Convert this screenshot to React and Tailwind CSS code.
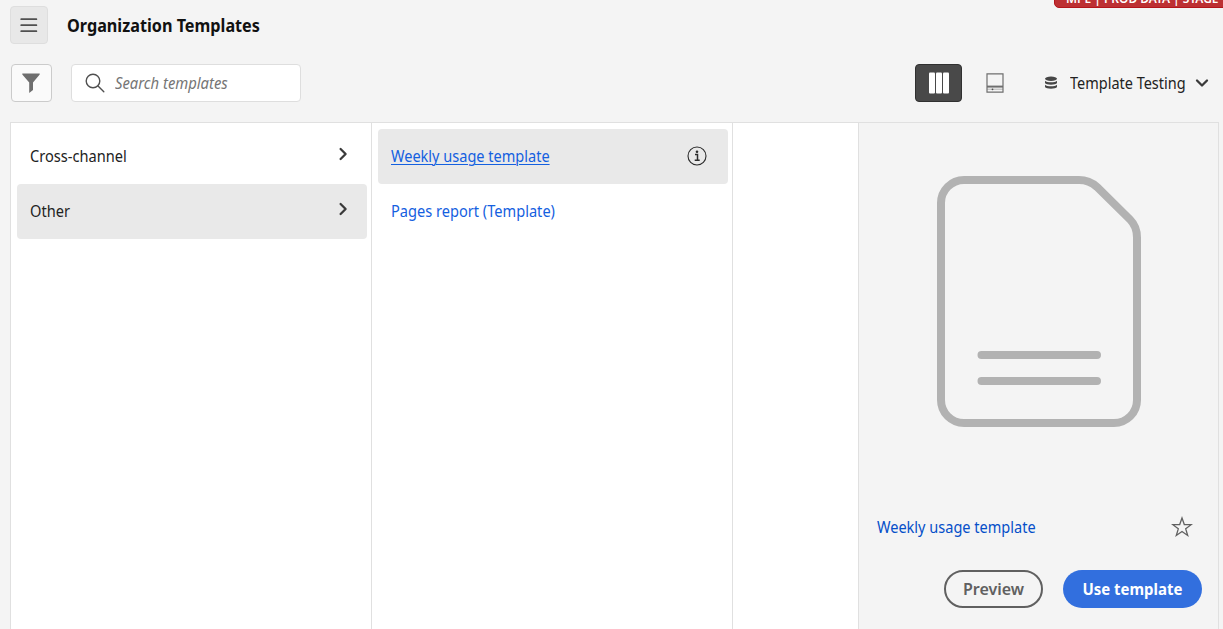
import React from 'react';

function MenuIcon() {
  return (
    <svg width="18" height="16" viewBox="0 0 18 16" stroke="#505050" strokeWidth="1.7" strokeLinecap="round">
      <path d="M1.200 2.200H16.400M1.200 8.200H16.400M1.200 14.200H16.400" />
    </svg>
  );
}

function Chevron({ className, down }) {
  return (
    <svg className={className} width="14" height="14" viewBox="0 0 14 14" fill="none" stroke="#3a3a3a" strokeWidth="2.3" strokeLinecap="round" strokeLinejoin="round">
      <path d={down ? 'M2 4.500L7 9.500L12 4.500' : 'M4.600 2L9.600 7L4.600 12'} />
    </svg>
  );
}

function FolderRow({ label, selected }) {
  return (
    <div className={`flex h-[55px] items-center justify-between rounded pl-[13px] pr-[17px] ${selected ? 'bg-[#e9e9e9]' : ''}`}>
      <span className="origin-left scale-x-[0.912] text-[16px] leading-5 text-[#222222]">{label}</span>
      <Chevron className="-mt-1" />
    </div>
  );
}

function Toolbar() {
  return (
    <div className="mt-5 flex h-[38px] items-center">
      <button className="ml-px flex h-[38px] w-[41px] items-center justify-center rounded border border-[#cbcbcb] bg-[#fafafa]">
        <svg className="-ml-0.5" width="20" height="20" viewBox="0 0 20 20" fill="#6e6e6e">
          <path d="M1.300 0.500H18.700V1.500L12 9.600V17L8.200 20V9.600L1.300 1.500Z" />
        </svg>
      </button>
      <div className="ml-[19px] flex h-[38px] w-[230px] items-center rounded border border-[#dedede] bg-white pl-[13px]">
        <svg width="20" height="20" viewBox="0 0 20 20" fill="none" stroke="#505050" strokeWidth="1.4" strokeLinecap="round">
          <circle cx="8" cy="8" r="6.8" />
          <path d="M13 13L18.800 18.800" />
        </svg>
        <span className="ml-[10px] origin-left scale-x-[0.925] text-[16px] leading-5 text-[#757575] italic">Search templates</span>
      </div>
      <button className="ml-auto flex h-[38px] w-[47px] items-center justify-center rounded border border-[#303030] bg-[#494949]">
        <svg width="22" height="22" viewBox="0 0 22 22" fill="#ffffff">
          <rect x="1" y="0.5" width="6" height="21" rx="1" />
          <rect x="8" y="0.5" width="6" height="21" rx="1" />
          <rect x="15" y="0.5" width="6" height="21" rx="1" />
        </svg>
      </button>
      <svg className="ml-6" width="18" height="20" viewBox="0 0 18 20" fill="none" stroke="#6e6e6e">
        <path d="M1 0.800H17V19.200H1Z" strokeWidth="1.2" />
        <path d="M1 13.600H17" strokeWidth="2" />
        <path d="M1 16.200H17" strokeWidth="0.5" />
        <circle cx="6.5" cy="16.3" r="0.9" fill="#505050" stroke="none" />
      </svg>
      <svg className="ml-10" width="14" height="14" viewBox="0 0 14 14" fill="#464646">
        <ellipse cx="7" cy="2.8" rx="6" ry="2.2" />
        <path d="M1 4.700C3 6.700 11 6.700 13 4.700V7C12 9.200 2 9.200 1 7Z" />
        <path d="M1 8.700C3 10.700 11 10.700 13 8.700V11C12 13.300 2 13.300 1 11Z" />
      </svg>
      <span className="ml-3 w-[116px] origin-left scale-x-[0.905] text-[16px] leading-5 whitespace-nowrap text-[#222222]">Template Testing</span>
      <Chevron down className="mr-[14px] ml-[9px]" />
    </div>
  );
}

function Preview() {
  return (
    <aside className="flex w-[361px] flex-col border-x border-[#e0e0e0]">
      <svg className="mt-[52px] ml-[77px]" width="206" height="254" viewBox="936 175 206 254" fill="none" stroke="#b2b2b2" strokeWidth="8" strokeLinecap="round">
        <path d="M964 180H1079C1086.500 180 1092 182.500 1097 187L1130 219.500C1135 224.500 1137 230 1137 237.500V400A23 23 0 0 1 1114 423H964A23 23 0 0 1 941 400V203A23 23 0 0 1 964 180Z" />
        <path d="M981.500 355H1097M981.500 381H1097" />
      </svg>
      <div className="mt-[87px] ml-[18px] flex h-[22px] items-center justify-between pr-[25px]">
        <a className="origin-left scale-x-[0.908] text-[16px] leading-5 text-[#054fc9]">Weekly usage template</a>
        <svg width="22" height="22" viewBox="0 0 22 22" fill="none" stroke="#606060" strokeWidth="1.3" strokeLinejoin="miter">
          <path d="M11 2L13.300 8.500L20.200 8.650L14.700 12.850L16.700 19.450L11 15.500L5.300 19.450L7.300 12.850L1.800 8.650L8.700 8.500Z" />
        </svg>
      </div>
      <div className="mt-8 flex justify-end gap-5 pr-4">
        <button className="flex h-[38px] w-[99px] items-center justify-center rounded-full border-2 border-[#606060] text-[16px] font-semibold text-[#606060]">Preview</button>
        <button className="flex h-[38px] w-[139px] items-center justify-center rounded-full bg-[#326fde] text-[16px] font-bold whitespace-nowrap text-white">
          <span className="scale-x-[0.935]">Use template</span>
        </button>
      </div>
    </aside>
  );
}

export default function App() {
  return (
    <div className="relative flex h-[629px] w-[1223px] flex-col overflow-hidden bg-[#f4f4f4] font-['Noto_Sans','Open_Sans',sans-serif]">
      <div className="absolute top-[-18px] left-[1054px] flex h-[26px] w-[190px] items-center rounded-[5px] border border-[#b3151b] bg-[#bd3033] pl-[11px] text-[13px] leading-4 font-semibold whitespace-nowrap text-white">
        <span className="mt-[5px] origin-left scale-x-[0.92]">MPE | PROD DATA | STAGE</span>
      </div>
      <header className="flex flex-col pt-[6px] pl-[10px]">
        <div className="flex h-[38px] items-center">
          <button className="flex h-[38px] w-[38px] items-center justify-center rounded border border-[#dedede] bg-[#e8e8e8]">
            <MenuIcon />
          </button>
          <h1 className="ml-[19px] origin-left scale-x-[0.9] text-[18px] leading-6 font-bold text-[#111111]">Organization Templates</h1>
        </div>
        <Toolbar />
      </header>
      <main className="mt-[19.5px] mr-1 ml-[10px] flex flex-1 border-t border-[#e0e0e0]">
        <section className="w-[361px] border-l border-[#e0e0e0] bg-white pt-[6px] pr-1 pl-[6px]">
          <FolderRow label="Cross-channel" />
          <FolderRow label="Other" selected />
        </section>
        <section className="w-[361px] border-l border-[#e0e0e0] bg-white pt-[6px] pr-1 pl-[6px]">
          <div className="flex h-[55px] items-center justify-between rounded bg-[#e9e9e9] pr-[21px] pl-[13px]">
            <a className="origin-left scale-x-[0.908] text-[16px] leading-5 text-[#1460e0] underline decoration-1 underline-offset-2">Weekly usage template</a>
            <svg width="20" height="20" viewBox="0 0 20 20" fill="none" stroke="#2c2c2c">
              <circle cx="10" cy="10" r="9" strokeWidth="1.1" />
              <path d="M8 8.500H10.500V14M7.700 14.200H12.700" strokeWidth="1.500" />
              <circle cx="10" cy="5.700" r="1.300" fill="#2c2c2c" stroke="none" />
            </svg>
          </div>
          <div className="flex h-[55px] items-center pl-[13px]">
            <a className="origin-left scale-x-[0.912] text-[16px] leading-5 text-[#1460e0]">Pages report (Template)</a>
          </div>
        </section>
        <section className="w-[126px] border-l border-[#e0e0e0] bg-white" />
        <Preview />
      </main>
    </div>
  );
}
